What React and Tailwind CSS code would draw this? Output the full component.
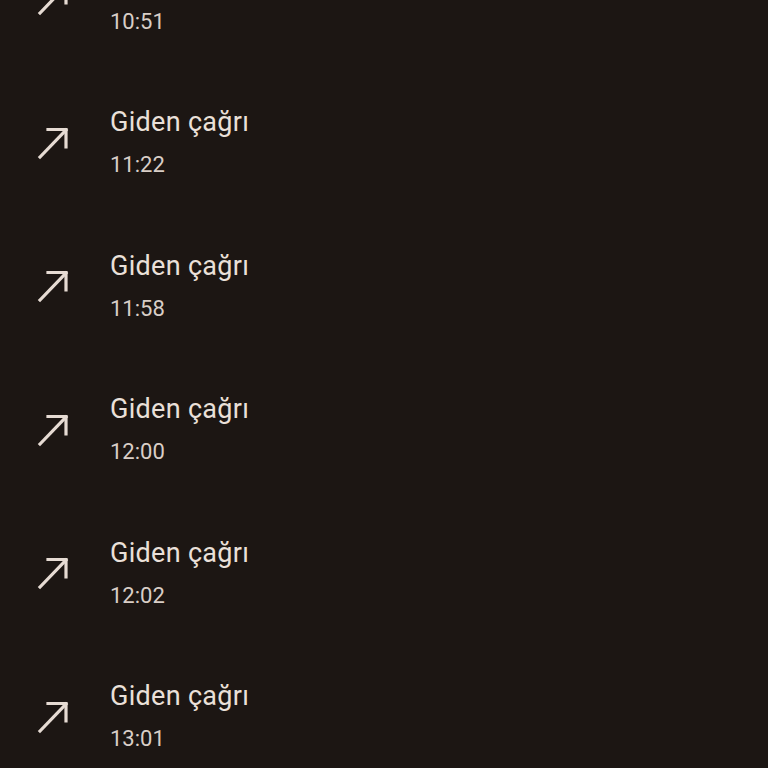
import React from "react";

const calls = ["10:51", "11:22", "11:58", "12:00", "12:02", "13:01"];

const ArrowOut = () => (
  <svg width="34" height="36" viewBox="0 0 34 36" fill="none">
    <path d="M4 32 L30 5" stroke="#e6dbd3" strokeWidth="3.2" strokeLinecap="square" />
    <path d="M12 4.5 H30 V22" stroke="#e6dbd3" strokeWidth="3.2" strokeLinecap="square" />
  </svg>
);

export default function App() {
  return (
    <div
      className="w-[768px] h-[768px] overflow-hidden bg-[#1c1613]"
      style={{ fontFamily: "Roboto, 'Noto Sans', sans-serif" }}
    >
      <div className="mt-[-72.5px] flex flex-col">
        {calls.map((t) => (
          <div key={t} className="h-[143.5px] flex items-center">
            <div className="w-[110px] pl-[36px] pt-0 flex">
              <ArrowOut />
            </div>
            <div className="flex flex-col">
              <div className="text-[27px] leading-[34px] text-[#eae0d9] tracking-[0.3px]">
                Giden çağrı
              </div>
              <div className="text-[22px] leading-[30px] mt-[11px] text-[#d9cec7]">
                {t}
              </div>
            </div>
          </div>
        ))}
      </div>
    </div>
  );
}
